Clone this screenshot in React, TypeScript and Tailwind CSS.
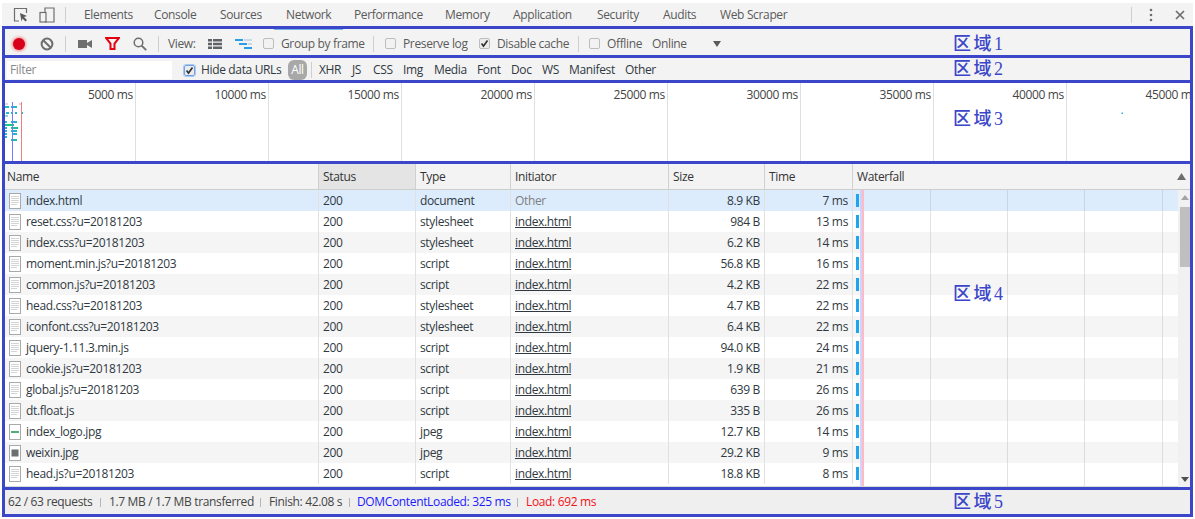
const uiFont = "font-['Open_Sans','Liberation_Sans',sans-serif]";

type Req = { name: string; type: string; init: string; size: string; time: string; icon?: "logo" | "qr" };

const rows: Req[] = [
  { name: "index.html", type: "document", init: "Other", size: "8.9 KB", time: "7 ms" },
  { name: "reset.css?u=20181203", type: "stylesheet", init: "index.html", size: "984 B", time: "13 ms" },
  { name: "index.css?u=20181203", type: "stylesheet", init: "index.html", size: "6.2 KB", time: "14 ms" },
  { name: "moment.min.js?u=20181203", type: "script", init: "index.html", size: "56.8 KB", time: "16 ms" },
  { name: "common.js?u=20181203", type: "script", init: "index.html", size: "4.2 KB", time: "22 ms" },
  { name: "head.css?u=20181203", type: "stylesheet", init: "index.html", size: "4.7 KB", time: "22 ms" },
  { name: "iconfont.css?u=20181203", type: "stylesheet", init: "index.html", size: "6.4 KB", time: "22 ms" },
  { name: "jquery-1.11.3.min.js", type: "script", init: "index.html", size: "94.0 KB", time: "24 ms" },
  { name: "cookie.js?u=20181203", type: "script", init: "index.html", size: "1.9 KB", time: "21 ms" },
  { name: "global.js?u=20181203", type: "script", init: "index.html", size: "639 B", time: "26 ms" },
  { name: "dt.float.js", type: "script", init: "index.html", size: "335 B", time: "26 ms" },
  { name: "index_logo.jpg", type: "jpeg", init: "index.html", size: "12.7 KB", time: "14 ms", icon: "logo" },
  { name: "weixin.jpg", type: "jpeg", init: "index.html", size: "29.2 KB", time: "9 ms", icon: "qr" },
  { name: "head.js?u=20181203", type: "script", init: "index.html", size: "18.8 KB", time: "8 ms" },
];

const tabs = [
  { label: "Elements", cls: "ml-[18px] w-[70px]" },
  { label: "Console", cls: "w-[66px]" },
  { label: "Sources", cls: "w-[66px]" },
  { label: "Network", cls: "w-[68px]" },
  { label: "Performance", cls: "w-[91px]" },
  { label: "Memory", cls: "w-[68px]" },
  { label: "Application", cls: "w-[84px]" },
  { label: "Security", cls: "w-[66px]" },
  { label: "Audits", cls: "w-[57px]" },
  { label: "Web Scraper", cls: "w-[80px]" },
];

const filters = [
  { label: "XHR", cls: "w-[33px]" },
  { label: "JS", cls: "w-[21px]" },
  { label: "CSS", cls: "w-[30px]" },
  { label: "Img", cls: "w-[31px]" },
  { label: "Media", cls: "w-[43px]" },
  { label: "Font", cls: "w-[34px]" },
  { label: "Doc", cls: "w-[31px]" },
  { label: "WS", cls: "w-[27px]" },
  { label: "Manifest", cls: "w-[56px]" },
  { label: "Other", cls: "w-[40px]" },
];

const ticks = ["5000", "10000", "15000", "20000", "25000", "30000", "35000", "40000", "45000"];

const overviewBars = [
  [5, 103, 3, "#dcdcdc"], [19, 103, 2, "#e8d0d0"],
  [5, 106, 4, "#26b5cf"], [11, 106, 6, "#26b5cf"],
  [6, 112, 3, "#26b5cf"], [11, 112, 2, "#26b5cf"], [15, 112, 2, "#26b5cf"], [22, 112, 1, "#26b5cf"],
  [5, 115, 3, "#8fd4e2"],
  [5, 121, 2, "#26b5cf"], [11, 121, 6, "#26b5cf"],
  [5, 124, 9, "#12c987"],
  [5, 127, 2, "#26b5cf"], [11, 127, 7, "#1cc28f"],
  [5, 130, 2, "#26b5cf"], [11, 130, 6, "#26b5cf"],
  [5, 133, 2, "#26b5cf"], [13, 133, 4, "#26b5cf"],
  [5, 136, 2, "#26b5cf"],
  [11, 139, 6, "#1cc2a8"],
] as const;

const Divider = ({ cls }: { cls: string }) => <div className={`w-px h-[16px] bg-[#cfcfcf] shrink-0 ${cls}`} />;

const Check = ({ on, cls, focus }: { on?: boolean; cls: string; focus?: boolean }) => (
  <span
    className={`w-[11px] h-[11px] rounded-[2px] border shrink-0 flex items-center justify-center ${
      focus ? "border-[#6ea1e6] outline outline-[#a9c7f0]" : "border-[#bdbdbd]"
    } ${on ? "bg-[#ececec]" : "bg-[#f2f2f2]"} ${cls}`}
  >
    {on && (
      <svg width="9" height="9" viewBox="0 0 9 9">
        <path d="M1.5 4.5 L3.5 7 L7.5 1.5" fill="none" stroke="#333" strokeWidth="1.7" />
      </svg>
    )}
  </span>
);

const FileIcon = ({ kind }: { kind?: "logo" | "qr" }) => (
  <svg width="12" height="16" viewBox="0 0 12 16" className="shrink-0">
    <rect x="0.5" y="0.5" width="11" height="15" fill="#fff" stroke="#a9a9a9" />
    {kind === "logo" && <rect x="2" y="7" width="8" height="2" fill="#4cb07a" />}
    {kind === "qr" && <rect x="2.5" y="4.5" width="7" height="7" fill="#6b7070" />}
    {!kind && <path d="M2 3.5h8M2 5.5h8M2 7.5h8M2 9.5h8M2 11.5h6" stroke="#d4d4d4" />}
  </svg>
);

const Region = ({ n, cls }: { n: number; cls: string }) => (
  <span
    className={`absolute z-10 text-[18px] leading-[20px] tracking-[2.5px] font-medium text-[#3b46c9] font-['Liberation_Serif','Noto_Sans_CJK_SC',serif] ${cls}`}
  >
    区域{n}
  </span>
);

const App = () => {
  return (
    <div className={`w-[1195px] h-[519px] bg-white overflow-hidden pt-[3px] text-[12px] tracking-[-0.35px] text-[#303942] ${uiFont}`}>
      {/* tab strip */}
      <div className="h-[23px] bg-[#f3f3f3] flex items-center pt-[1px] text-[#5a5a5a] ml-[2px] w-[1191px]">
        <svg width="16" height="16" viewBox="0 0 16 16" className="ml-[11px]">
          <path d="M6 14H1.5V1.5h12V6" fill="none" stroke="#6e6e6e" strokeWidth="1.2" />
          <path d="M7 6l7 3-3 1 3 3-1.5 1.5-3-3-1 3z" fill="#5a5a5a" />
        </svg>
        <svg width="16" height="16" viewBox="0 0 16 16" className="ml-[10px]">
          <path d="M6 5V1h9v14H6" fill="none" stroke="#6e6e6e" strokeWidth="1.2" />
          <rect x="1" y="5.5" width="6" height="9.5" fill="none" stroke="#6e6e6e" strokeWidth="1.2" />
        </svg>
        <Divider cls="ml-[10px]" />
        {tabs.map((t) => (
          <span key={t.label} className={`shrink-0 ${t.cls}`}>
            {t.label}
          </span>
        ))}
        <div className="flex-1" />
        <Divider cls="" />
        <svg width="4" height="14" viewBox="0 0 4 14" className="ml-[17px]">
          <circle cx="2" cy="2" r="1.3" fill="#6e6e6e" />
          <circle cx="2" cy="7" r="1.3" fill="#6e6e6e" />
          <circle cx="2" cy="12" r="1.3" fill="#6e6e6e" />
        </svg>
        <svg width="10" height="10" viewBox="0 0 10 10" className="ml-[22px] mr-[8px]">
          <path d="M1 1l8 8M9 1l-8 8" stroke="#6e6e6e" strokeWidth="1.7" />
        </svg>
      </div>

      {/* annotated panel */}
      <div className="w-[1191px] ml-[2px] border-[3px] border-[#3b46c9] flex flex-col">
        {/* 区域1 */}
        <div className="relative h-[26px] bg-[#f3f3f3] pt-[3px] flex items-center text-[#5a5a5a] box-border">
          <div className="absolute left-[269px] top-0 w-[69px] h-[1px] bg-[#72b3e8]" />
          <span className="ml-[8px] w-[12px] h-[12px] rounded-full bg-[#d9001b] shadow-[0_0_3px_1px_#e88]" />
          <svg width="14" height="14" viewBox="0 0 14 14" className="ml-[15px]">
            <circle cx="7" cy="7" r="5.4" fill="none" stroke="#6e6e6e" strokeWidth="2" />
            <path d="M3.2 3.2l7.6 7.6" stroke="#6e6e6e" strokeWidth="2" />
          </svg>
          <Divider cls="ml-[11px]" />
          <svg width="14" height="10" viewBox="0 0 14 10" className="ml-[12px]">
            <rect x="0" y="1" width="9" height="8" fill="#6e6e6e" />
            <path d="M9 4l5-3v8l-5-3z" fill="#6e6e6e" />
          </svg>
          <svg width="15" height="13" viewBox="0 0 15 13" className="ml-[13px]">
            <path d="M1 1h13L9.5 6.5V12h-4V6.5z" fill="none" stroke="#e3000f" strokeWidth="2" />
          </svg>
          <svg width="14" height="14" viewBox="0 0 14 14" className="ml-[13px]">
            <circle cx="5.5" cy="5.5" r="4.3" fill="none" stroke="#6e6e6e" strokeWidth="1.5" />
            <path d="M8.6 8.6l4.6 4.6" stroke="#6e6e6e" strokeWidth="1.9" />
          </svg>
          <Divider cls="ml-[11px]" />
          <span className="ml-[9px] w-[40px]">View:</span>
          <svg width="14" height="10" viewBox="0 0 14 10">
            <path d="M0 0h4v2.5H0zM5 0h9v2.5H5zM0 3.7h4v2.6H0zM5 3.7h9v2.6H5zM0 7.5h4V10H0zM5 7.5h9V10H5z" fill="#5f6368" />
          </svg>
          <svg width="17" height="10" viewBox="0 0 17 10" className="ml-[13px]">
            <path d="M0 0h8v2H0zM4 4h8v2H4zM9 8h8v2H9z" fill="#2a9de8" />
            <path d="M9 0h8v2H9zM13 4h4v2h-4z" fill="#c9d9e6" />
          </svg>
          <Check cls="ml-[11px]" />
          <span className="ml-[7px] w-[84px] whitespace-nowrap">Group by frame</span>
          <Divider cls="ml-[8px]" />
          <Check cls="ml-[11px]" />
          <span className="ml-[7px] w-[65px] whitespace-nowrap">Preserve log</span>
          <Check on cls="ml-[11px]" />
          <span className="ml-[7px] w-[72px] whitespace-nowrap">Disable cache</span>
          <Divider cls="ml-[9px]" />
          <Check cls="ml-[10px]" />
          <span className="ml-[7px] w-[36px]">Offline</span>
          <span className="ml-[9px] w-[36px]">Online</span>
          <svg width="8" height="6" viewBox="0 0 8 6" className="ml-[25px]">
            <path d="M0 0h8L4 6z" fill="#5a5a5a" />
          </svg>
          <Region n={1} cls="left-[948px] top-[5px]" />
        </div>

        {/* 区域2 */}
        <div className="relative h-[25px] border-t-[3px] border-[#3b46c9] bg-[#f3f3f3] pt-[2px] flex items-center text-[#5a5a5a] box-border">
          <div className="ml-[2px] w-[165px] h-[18px] bg-white text-[#8a8a8a] pl-[3px] leading-[18px]">Filter</div>
          <Check on focus cls="ml-[12px]" />
          <span className="ml-[6px] w-[87px] whitespace-nowrap text-[#303942]">Hide data URLs</span>
          <span className="w-[19px] h-[20px] rounded-[6px] bg-[#a8a8a8] text-white text-center leading-[20px]">All</span>
          <Divider cls="ml-[4px]" />
          <div className="flex ml-[7px] text-[#303942]">
            {filters.map((f) => (
              <span key={f.label} className={`shrink-0 ${f.cls}`}>
                {f.label}
              </span>
            ))}
          </div>
          <Region n={2} cls="left-[948px] top-[1px]" />
        </div>

        {/* 区域3 */}
        <div className="relative h-[81px] border-t-[3px] border-[#3b46c9] bg-white flex overflow-hidden box-border">
          {ticks.map((t, i) => (
            <div
              key={t}
              className={`h-full shrink-0 border-r border-[#dfdfdf] text-right pr-[2px] pt-[3px] leading-[18px] text-[#444] ${
                i === 0 ? "w-[131px]" : "w-[133px]"
              }`}
            >
              {t} ms
            </div>
          ))}
          <svg className="absolute left-0 top-0" width="1185" height="78">
            <g transform="translate(-5,-83)">
              {overviewBars.map(([x, y, w, c], i) => (
                <rect key={i} x={x} y={y} width={w} height={2} fill={c} />
              ))}
              <rect x="12" y="102" width="1" height="59" fill="#7a7aff" />
              <rect x="21" y="102" width="1" height="59" fill="#e88080" />
              <rect x="1121.5" y="112.5" width="1.5" height="1.5" fill="#26b5cf" />
            </g>
          </svg>
          <Region n={3} cls="left-[948px] top-[26px]" />
        </div>

        {/* 区域4 */}
        <div className="relative h-[326px] border-t-[3px] border-[#3b46c9] bg-white flex flex-col box-border">
          <div className="h-[26px] shrink-0 bg-[#f3f3f3] border-b border-[#cdcdcd] grid grid-cols-[314px_97px_95px_158px_96px_88px_1fr] leading-[25px] text-[#333]">
            <div className="border-r border-[#d0d0d0] pl-[2px]">Name</div>
            <div className="border-r border-[#d0d0d0] pl-[4px] bg-[#e4e4e4]">Status</div>
            <div className="border-r border-[#d0d0d0] pl-[4px]">Type</div>
            <div className="border-r border-[#d0d0d0] pl-[4px]">Initiator</div>
            <div className="border-r border-[#d0d0d0] pl-[4px]">Size</div>
            <div className="border-r border-[#d0d0d0] pl-[4px]">Time</div>
            <div className="pl-[4px] flex items-center justify-between pr-[4px]">
              Waterfall
              <svg width="9" height="7" viewBox="0 0 9 7">
                <path d="M4.5 0L9 7H0z" fill="#6e6e6e" />
              </svg>
            </div>
          </div>
          <div className="flex-1 flex min-h-0">
            <div className="relative w-[1173px] border-b border-[#d8d8d8]">
              {rows.map((r, i) => (
                <div
                  key={r.name}
                  className={`h-[21px] grid grid-cols-[314px_97px_95px_158px_96px_88px_1fr] leading-[21px] ${
                    i === 0 ? "bg-[#dcecfd]" : i % 2 === 0 ? "bg-[#f5f5f5]" : "bg-white"
                  }`}
                >
                  <div className="border-r border-[#e1e1e1] pl-[4px] flex items-center gap-[5px]">
                    <FileIcon kind={r.icon} />
                    <span className="whitespace-nowrap">{r.name}</span>
                  </div>
                  <div className="border-r border-[#e1e1e1] pl-[4px]">200</div>
                  <div className="border-r border-[#e1e1e1] pl-[4px]">{r.type}</div>
                  <div className={`border-r border-[#e1e1e1] pl-[4px] ${r.init === "Other" ? "text-[#808080]" : "underline"}`}>
                    {r.init}
                  </div>
                  <div className="border-r border-[#e1e1e1] pr-[4px] text-right">{r.size}</div>
                  <div className="border-r border-[#e1e1e1] pr-[4px] text-right">{r.time}</div>
                  <div className="flex items-center pl-[3px]">
                    <span className="w-[3px] h-[13px] bg-[#1da5ef]" />
                  </div>
                </div>
              ))}
              {/* waterfall guide lines */}
              <div className="absolute top-0 bottom-0 left-[855px] w-[2px] bg-[#c9c9ff]/80" />
              <div className="absolute top-0 bottom-0 left-[857px] w-[2px] bg-[#fdbcc4]" />
              <div className="absolute top-0 bottom-0 left-[925px] w-px bg-[#a0a0a0]/30" />
              <div className="absolute top-0 bottom-0 left-[1002px] w-px bg-[#a0a0a0]/30" />
              <div className="absolute top-0 bottom-0 left-[1079px] w-px bg-[#a0a0a0]/30" />
              <div className="absolute top-0 bottom-0 left-[1157px] w-px bg-[#a0a0a0]/30" />
            </div>
            <div className="w-[12px] bg-[#f1f1f1] flex flex-col items-end relative">
              <svg width="8" height="5" viewBox="0 0 8 5" className="mt-[5px] mr-[1px]">
                <path d="M4 0l4 5H0z" fill="#a3a3a3" />
              </svg>
              <div className="w-[10px] h-[60px] mt-[7px] bg-[#bfbfbf]" />
              <div className="flex-1" />
              <svg width="8" height="5" viewBox="0 0 8 5" className="mb-[5px] mr-[1px]">
                <path d="M0 0h8L4 5z" fill="#505050" />
              </svg>
            </div>
          </div>
          <Region n={4} cls="left-[948px] top-[120px]" />
        </div>

        {/* 区域5 */}
        <div className="relative h-[27px] border-t-[3px] border-[#3b46c9] bg-[#efefef] flex items-center pl-[3px] box-border text-[#444] whitespace-nowrap">
          <span className="w-[92px]">62 / 63 requests</span>
          <span className="w-px h-[9px] bg-[#b5b5b5] mr-[8px]" />
          <span className="w-[151px]">1.7 MB / 1.7 MB transferred</span>
          <span className="w-px h-[9px] bg-[#b5b5b5] mr-[8px]" />
          <span className="w-[80px]">Finish: 42.08 s</span>
          <span className="w-px h-[9px] bg-[#b5b5b5] mr-[7px]" />
          <span className="w-[160px] text-[#1a1aff]">DOMContentLoaded: 325 ms</span>
          <span className="w-px h-[9px] bg-[#b5b5b5] mr-[8px]" />
          <span className="text-[#f5101a]">Load: 692 ms</span>
          <Region n={5} cls="left-[948px] top-[2px]" />
        </div>
      </div>
    </div>
  );
};

export default App;
